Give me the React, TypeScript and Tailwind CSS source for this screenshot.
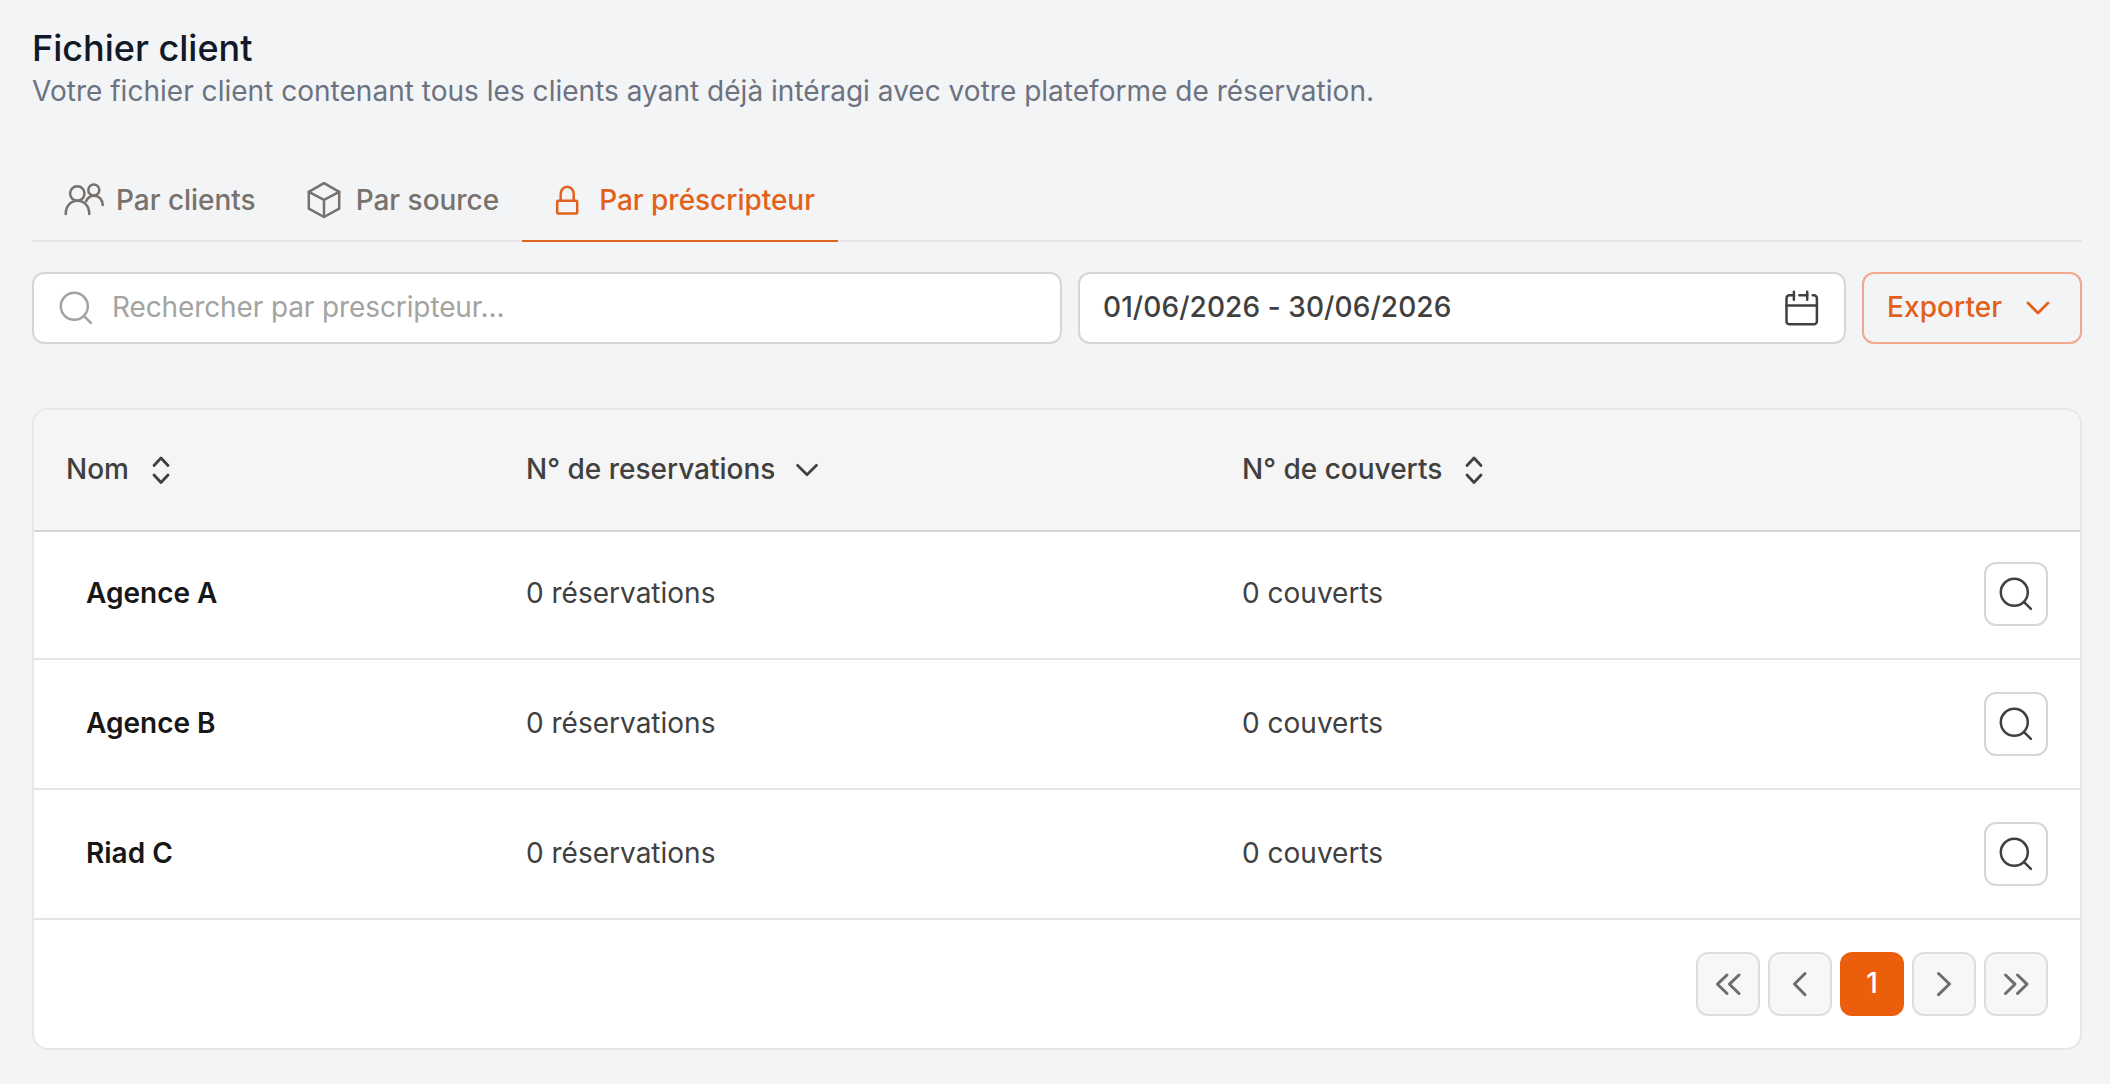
import type { ReactNode } from "react";

type Row = {
  id: number;
  name: string;
  reservations: number;
  covers: number;
};

const rows: Row[] = [
  { id: 1, name: "Agence A", reservations: 0, covers: 0 },
  { id: 2, name: "Agence B", reservations: 0, covers: 0 },
  { id: 3, name: "Riad C", reservations: 0, covers: 0 },
];

type IconProps = {
  className?: string;
  children?: ReactNode;
};

// 40x40 grid, shared by every outlined icon
function Icon({ className = "stroke-[2.5]", children }: IconProps) {
  return (
    <svg
      viewBox="0 0 40 40"
      fill="none"
      stroke="currentColor"
      strokeLinecap="round"
      strokeLinejoin="round"
      className={`size-10 shrink-0 ${className}`}
    >
      {children}
    </svg>
  );
}

function UsersIcon() {
  return (
    <Icon>
      <circle cx="13.3" cy="13.5" r="7.2" />
      <path d="M1.7 34c0-8 5.2-13.2 11.8-13.2S25.3 26 25.3 34" />
      <circle cx="29.8" cy="10.1" r="5.5" />
      <path d="M22.1 21.3c1.4-3.4 4.4-5.6 7.9-5.6 5 0 8.7 4 8.7 9.3" />
    </Icon>
  );
}

function CubeIcon() {
  return (
    <Icon>
      <path d="M20 3.2 35.2 11.8v16.8L20 37 4.8 28.6V11.8z" />
      <path d="m4.8 11.8 15.2 8 15.2-8M20 19.8V37" />
    </Icon>
  );
}

function LockIcon() {
  return (
    <Icon>
      <rect x="10.2" y="20.8" width="20" height="12.8" rx="1" />
      <path d="M13.7 20.8V14a6.5 7.3 0 0 1 13 0v6.8" />
    </Icon>
  );
}

function SearchIcon() {
  return (
    <Icon>
      <circle cx="18.3" cy="18.3" r="13.5" />
      <path d="m28.3 28.3 6.6 6.5" />
    </Icon>
  );
}

function CalendarIcon() {
  return (
    <Icon>
      <path d="M12 7.3H7.5a3 3 0 0 0-3 3v23a3 3 0 0 0 3 3h24.4a3 3 0 0 0 3-3v-23a3 3 0 0 0-3-3h-1.2M17.3 7.3h8" />
      <path d="M4.5 17.5h30.4M11.9 3.8v8M25.2 3.8v8" />
    </Icon>
  );
}

function ChevronDownIcon({ className }: { className?: string }) {
  return (
    <Icon className={className}>
      <path d="m10 15 10 10 10-10" />
    </Icon>
  );
}

function SortIcon() {
  return (
    <Icon className="stroke-[2.8]">
      <path d="m13 16.5 7-7.5 7 7.5M13 26l7 7.5 7-7.5" />
    </Icon>
  );
}

function TabItem({
  icon,
  label,
  active = false,
}: {
  icon: ReactNode;
  label: string;
  active?: boolean;
}) {
  return (
    <button
      className={`flex h-[86px] items-center gap-3 border-b-2 pt-[3px] font-medium tracking-[-0.001em] ${
        active
          ? "-ml-px border-[#dd6321] pl-[25px] pr-[23px] text-[#e2611a]"
          : "border-transparent px-6 text-[#78716c]"
      }`}
    >
      {icon}
      {label}
    </button>
  );
}

function PageButton({ path }: { path: string }) {
  return (
    <button className="flex size-16 items-center justify-center rounded-xl border-2 border-[#dededd] bg-[#f7f7f7] text-[#6d6d6d]">
      <Icon className="stroke-3">
        <path d={path} />
      </Icon>
    </button>
  );
}

export default function App() {
  return (
    <div className="h-[1084px] w-[2110px] bg-[#f3f4f6] px-[28px] pl-8 pt-6 font-['Inter',sans-serif] text-[28px] leading-10 text-[#404040]">
      <header>
        <h1 className="text-[36px] font-medium leading-[48px] text-[#111827]">
          Fichier client
        </h1>
        <p className="-mt-px tracking-[0.0007em] text-[#6b7280]">
          Votre fichier client contenant tous les clients ayant déjà intéragi
          avec votre plateforme de réservation.
        </p>
      </header>

      <nav className="mt-[45px] flex h-[86px] pl-2 shadow-[inset_0_-2px_0_#e5e5e5]">
        <TabItem icon={<UsersIcon />} label="Par clients" />
        <TabItem icon={<CubeIcon />} label="Par source" />
        <TabItem icon={<LockIcon />} label="Par préscripteur" active />
      </nav>

      <div className="mt-[30px] flex h-[72px] gap-4">
        <div className="flex w-[1030px] items-center gap-4 rounded-xl border-2 border-[#d6d6d4] bg-white pl-[22px] tracking-[-0.004em] text-[#a3a3a0]">
          <SearchIcon />
          <span className="pb-0.5">Rechercher par prescripteur...</span>
        </div>
        <div className="flex w-[768px] items-center justify-between rounded-xl border-2 border-[#d6d6d4] bg-white pl-[23px] pr-[22px] font-medium tracking-[0.003em]">
          <span className="pb-0.5">01/06/2026 - 30/06/2026</span>
          <CalendarIcon />
        </div>
        <button className="flex w-[220px] items-center justify-between rounded-xl border-2 border-[#f2a68c] pl-[23px] pr-[22px] font-medium tracking-[0.003em] text-[#e2611a]">
          <span className="pb-0.5">Exporter</span>
          <ChevronDownIcon className="stroke-[2.8]" />
        </button>
      </div>

      <section className="mt-16 h-[642px] overflow-hidden rounded-2xl border-2 border-[#e5e7e8] bg-white">
        <div className="grid h-[122px] grid-cols-[460px_716px_1fr] items-center border-b-2 border-[#d4d4d3] bg-[#f5f5f5] pb-0.5 pl-8 font-medium">
          <div className="flex items-center gap-3">
            Nom
            <SortIcon />
          </div>
          <div className="flex items-center gap-3">
            N° de reservations
            <ChevronDownIcon className="stroke-[2.8] pt-0.5" />
          </div>
          <div className="flex items-center gap-3">
            N° de couverts
            <SortIcon />
          </div>
        </div>

        {rows.map((row) => (
          <div
            key={row.id}
            className="grid h-[130px] grid-cols-[440px_716px_1fr_64px] items-center border-b-2 border-[#e5e5e5] pl-[52px] pr-8 nth-2:h-32 nth-2:pb-0.5"
          >
            <div className="pb-0.5 font-semibold text-[#171717]">
              {row.name}
            </div>
            <div className="pb-0.5">{row.reservations} réservations</div>
            <div className="pb-0.5">{row.covers} couverts</div>
            <button className="flex size-16 items-center justify-center rounded-xl border-2 border-[#d6d6d4] bg-white">
              <SearchIcon />
            </button>
          </div>
        ))}

        <div className="flex justify-end gap-2 pr-8 pt-8">
          <PageButton path="M19 11 9.5 20.2 19 29.5M31 11l-9.5 9.2 9.5 9.3" />
          <PageButton path="M25 9.5 14.5 20 25 30.7" />
          <button className="size-16 rounded-xl bg-[#ea5e0c] pb-0.5 font-medium text-white">
            1
          </button>
          <PageButton path="m14.5 9.5 11 10.5-11 10.7" />
          <PageButton path="m9.5 11 9.5 9.2-9.5 9.3M21.5 11l9.5 9.2-9.5 9.3" />
        </div>
      </section>
    </div>
  );
}
